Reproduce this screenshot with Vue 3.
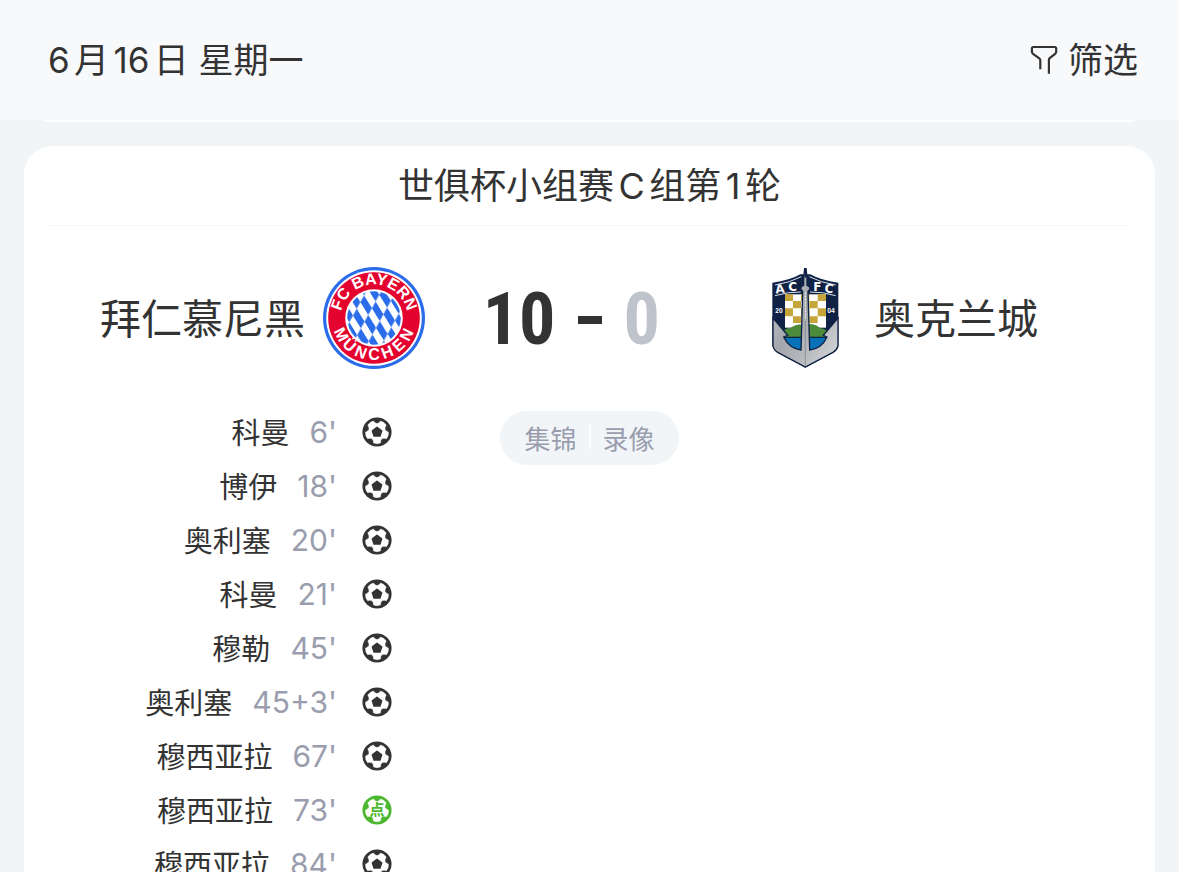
<template>
  <div class="page">
    <header class="date-bar">
      <h1 class="date">6月16日 星期一</h1>
      <button type="button" class="filter">
        <svg class="filter-icon" viewBox="0 0 28 30" fill="none" stroke="#333" stroke-width="2.2" stroke-linejoin="round">
          <path d="M10.3 24.2V15.4Q10.3 14.2 9.3 13.4L3 8.8Q1.9 8 1.9 6.8V3.6Q1.9 2 3.5 2H24.6Q26.2 2 26.2 3.6V6.8Q26.2 8 25.1 8.8L20 12.9Q18.9 13.8 18.9 15V28.8" />
        </svg>
        筛选
      </button>
    </header>

    <main class="list">
      <section class="card card-prev"></section>

      <section class="card">
        <h2 class="card-title">世俱杯小组赛C组第1轮</h2>

        <div class="match">
          <div class="team home">
            <span class="team-name">拜仁慕尼黑</span>
            <svg class="team-logo" viewBox="0 0 102 102">
              <defs>
                <path id="arcTop" d="M17.5 51a33.5 33.5 0 0 1 67 0" />
                <clipPath id="core"><circle cx="51" cy="51" r="26.8" /></clipPath>
                <pattern id="lozenge" width="10" height="20" patternUnits="userSpaceOnUse" patternTransform="translate(51 51) rotate(-12) skewY(40)">
                  <rect width="10" height="20" fill="#fff" />
                  <path d="M0 10L5 0l5 10l-5 10z" fill="#2a6cea" />
                </pattern>
              </defs>
              <circle cx="51" cy="51" r="51" fill="#2a6cea" />
              <circle cx="51" cy="51" r="47.8" fill="#fff" />
              <circle cx="51" cy="51" r="45.8" fill="#e4032e" />
              <circle cx="51" cy="51" r="28.8" fill="#fff" />
              <rect x="20" y="20" width="62" height="62" fill="url(#lozenge)" clip-path="url(#core)" />
              <text class="crest-text">
                <textPath href="#arcTop" startOffset="50%" text-anchor="middle">FC BAYERN</textPath>
              </text>
              <text
                v-for="l in crestLetters"
                :key="l.angle"
                class="crest-text"
                x="51"
                y="93"
                text-anchor="middle"
                :transform="`rotate(${l.angle} 51 51)`"
              >{{ l.char }}</text>
            </svg>
          </div>

          <div class="score">
            <span class="score-home">10</span>
            <span class="score-dash"></span>
            <span class="score-away">0</span>
          </div>

          <div class="team away">
            <svg class="team-logo" viewBox="-3 33 306 306">
              <defs>
                <linearGradient id="steel" x1="0" y1="0" x2="1" y2="1">
                  <stop offset="0" stop-color="#c9cbce" />
                  <stop offset="0.45" stop-color="#a3a6ab" />
                  <stop offset="0.7" stop-color="#b9bbbf" />
                  <stop offset="1" stop-color="#d9dadd" />
                </linearGradient>
              </defs>
              <path d="M52 80Q105 73 136 55H166Q197 73 250 80V268Q247 282 234 290L151 335L68 290Q55 282 52 268Z" fill="#0f2144" />
              <path d="M60 87Q105 80 139 62M163 62Q197 80 242 87" fill="none" stroke="#dfe3ea" stroke-width="3" />
              <path d="M60 119Q100 107 137 108M165 108Q202 107 242 119" fill="none" stroke="#dfe3ea" stroke-width="3" />
              <rect x="90" y="115" width="123" height="100" fill="#fff" />
              <path d="M90 115h24v20h-24zM138 115h25v20h-25zM188 115h25v20h-25zM114 135h24v22h-24zM163 135h25v22h-25zM90 157h24v24h-24zM138 157h25v24h-25zM188 157h25v24h-25zM114 181h24v20h-24zM163 181h25v20h-25z" fill="#c5a63a" />
              <path d="M78 243Q80 217 107 215Q125 203 151 205Q178 200 195 216Q217 218 228 243Z" fill="#4b8b3b" />
              <path d="M76 244H227L222 272Q190 300 151 303Q107 296 80 272Z" fill="#0872b9" />
              <path d="M74 244H229" stroke="#0f2144" stroke-width="4" />
              <path d="M146 64L149 38H153L156 64V88Q165 90 165 100L159 106L164 282Q200 278 216 243L205 238L249 186V270Q246 282 234 289L151 333L68 289Q56 282 54 270V186L98 238L86 243Q103 278 138 282L143 106L137 100Q137 90 146 88Z" fill="url(#steel)" stroke="#0f2144" stroke-width="4" />
              <path d="M151 110V190" stroke="#fff" stroke-width="3" stroke-dasharray="5 4" />
              <path d="M151 195V328" stroke="#7b7f86" stroke-width="2" />
              <path d="M151 38V65" stroke="#0f2144" stroke-width="5" />
              <g class="badge-text">
                <text x="61" y="111" transform="rotate(-6 76 100)">A</text>
                <text x="100" y="105">C</text>
                <text x="175" y="105">F</text>
                <text x="209" y="111" transform="rotate(6 228 100)">C</text>
              </g>
              <text class="badge-year" x="61" y="170">20</text>
              <text class="badge-year" x="217" y="170">04</text>
            </svg>
            <span class="team-name">奥克兰城</span>
          </div>
        </div>

        <div class="details">
          <ul class="events">
            <li v-for="(e, i) in events" :key="i" class="event">
              <span class="player">{{ e.player }}</span>
              <span class="minute">{{ e.minute }}</span>
              <svg class="ball" viewBox="0 0 30 30">
                <circle cx="15" cy="15" r="14.6" :fill="e.penalty ? '#4cb82f' : '#333'" />
                <path
                  v-for="n in 5"
                  :key="n"
                  d="M15 15L10 21.6Q11.4 23.2 11.6 26Q15 27.4 18.4 26Q18.6 23.2 20 21.6Z"
                  fill="#fff"
                  stroke="#fff"
                  stroke-width="0.4"
                  :transform="`rotate(${n * 72} 15 15)`"
                />
                <text v-if="e.penalty" class="ball-text" x="15" y="20" text-anchor="middle">点</text>
                <path v-else d="M15 10.4L19.6 13.8L17.9 19H12.1L10.4 13.8Z" fill="#333" stroke="#333" stroke-width="1.6" stroke-linejoin="round" />
              </svg>
            </li>
          </ul>

          <nav class="media">
            <a href="#">集锦</a>
            <span class="media-line"></span>
            <a href="#">录像</a>
          </nav>
        </div>
      </section>
    </main>
  </div>
</template>

<script setup>
const events = [
  { player: '科曼', minute: "6'" },
  { player: '博伊', minute: "18'" },
  { player: '奥利塞', minute: "20'" },
  { player: '科曼', minute: "21'" },
  { player: '穆勒', minute: "45'" },
  { player: '奥利塞', minute: "45+3'" },
  { player: '穆西亚拉', minute: "67'" },
  { player: '穆西亚拉', minute: "73'", penalty: true },
  { player: '穆西亚拉', minute: "84'" }
]

// 队徽下半圈文字，从左到右排列
const crestLetters = [...'MÜNCHEN'].map((char, i) => ({
  char,
  angle: 63 - i * 21
}))
</script>

<style>
body {
  margin: 0;
  background: #f1f5f8;
}
</style>

<style scoped>
.page {
  display: flex;
  flex-direction: column;
  height: 100vh;
  color: #333;
  background: #f1f5f8;
  font-family: Inter, "Noto Sans CJK SC", sans-serif;
  text-autospace: normal;
}

.date-bar {
  flex: none;
  display: flex;
  align-items: center;
  justify-content: space-between;
  height: 120px;
  padding: 0 41px 0 48px;
  box-sizing: border-box;
  background: #f8f9fb;
}

.date {
  margin: 0;
  font-size: 35px;
  font-weight: 400;
  line-height: 48px;
}

.filter {
  display: flex;
  align-items: center;
  gap: 10px;
  padding: 0;
  border: none;
  background: none;
  color: inherit;
  font-family: inherit;
  font-size: 35px;
  line-height: 48px;
  cursor: pointer;
}

.filter-icon {
  width: 28px;
  height: 30px;
}

.list {
  flex: 1;
  min-height: 0;
  padding: 0 24px;
  overflow: hidden;
}

.card {
  padding: 0 24px 32px;
  border-radius: 28px;
  background: #fff;
}

.card-prev {
  height: 28px;
  margin: -58px 0 24px;
}

.card-title {
  margin: 0;
  padding-top: 2px;
  border-bottom: 1px solid #f7f7f8;
  font-size: 36px;
  font-weight: 400;
  line-height: 77px;
  text-align: center;
}

.match {
  display: grid;
  grid-template-columns: 1fr 329px 1fr;
  align-items: center;
  padding: 41px 0 36px;
}

.team {
  display: flex;
  align-items: center;
  gap: 18px;
  font-size: 41px;
  line-height: 60px;
  white-space: nowrap;
}

.team-name {
  padding-top: 2px;
}

.home {
  justify-content: flex-end;
}

.team-logo {
  flex: none;
  width: 102px;
  height: 102px;
}

.crest-text {
  fill: #fff;
  font-family: "Liberation Sans", sans-serif;
  font-size: 16px;
  font-weight: 700;
}

.badge-text {
  fill: #fff;
  font-family: "DejaVu Sans", sans-serif;
  font-size: 36px;
  font-weight: 700;
}

.badge-year {
  fill: #fff;
  font-family: "Liberation Sans", sans-serif;
  font-size: 20px;
  font-weight: 700;
}

.score {
  display: grid;
  grid-template-columns: 1fr 24px 1fr;
  align-items: center;
  gap: 22px;
  padding-top: 4px;
  font-family: "Roboto Condensed", Roboto, sans-serif;
  font-size: 72px;
  font-weight: 700;
  line-height: 80px;
}

.score-home {
  text-align: right;
}

.score-dash {
  height: 8px;
  background: #333;
}

.score-away {
  color: #bfc3cc;
}

.details {
  display: grid;
  grid-template-columns: 1fr 329px 1fr;
  align-items: start;
}

.events {
  margin: 0;
  padding: 0 33px 0 0;
  list-style: none;
}

.event {
  display: flex;
  align-items: center;
  justify-content: flex-end;
  height: 54px;
  font-size: 29px;
  white-space: nowrap;
}

.player {
  padding-bottom: 2px;
}

.minute {
  margin: 0 25px 0 20px;
  color: #999dad;
  font-size: 30px;
}

.ball {
  width: 30px;
  height: 30px;
}

.ball-text {
  fill: #4cb82f;
  font-size: 15px;
  font-weight: 700;
}

.media {
  display: flex;
  align-items: center;
  justify-self: center;
  gap: 12px;
  height: 54px;
  margin-top: 6px;
  padding: 0 24px 2px;
  box-sizing: border-box;
  border-radius: 27px;
  background: #f1f5f8;
  font-size: 26px;
}

.media a {
  color: #999dad;
  text-decoration: none;
}

.media-line {
  width: 2px;
  height: 24px;
  background: #fff;
}
</style>
